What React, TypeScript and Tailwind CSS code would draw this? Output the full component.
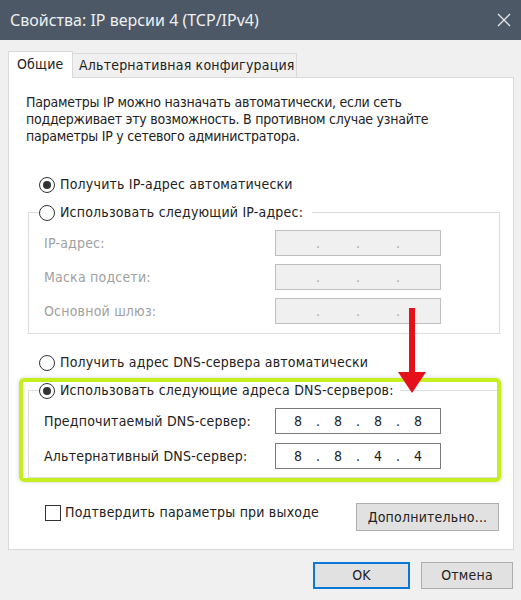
import React from 'react';

type RadioProps = { checked?: boolean; label: string };

const Radio: React.FC<RadioProps> = ({ checked, label }) => (
  <div className="flex items-center h-[17px]">
    <span className="w-[16px] h-[16px] rounded-full border border-[#333333] bg-white flex items-center justify-center shrink-0">
      {checked && <span className="w-[8px] h-[8px] rounded-full bg-[#333333]" />}
    </span>
    <span className="ml-[5px] whitespace-nowrap">{label}</span>
  </div>
);

type IpFieldProps = { parts: string[]; disabled?: boolean };

const IpField: React.FC<IpFieldProps> = ({ parts, disabled }) => (
  <div
    className={
      disabled
        ? 'w-[166px] h-[26px] border border-[#bfbfbf] bg-[#f0f0f0] text-[#a8a8a8] flex items-center pl-[12px] tracking-normal'
        : 'w-[166px] h-[26px] border border-[#7a7a7a] bg-white text-[#222222] flex items-center pl-[12px] tracking-normal'
    }
  >
    {parts.map((p, i) => (
      <React.Fragment key={i}>
        {i > 0 && <span className="w-[20px] text-center">.</span>}
        <span className="w-[20px] text-center">{p}</span>
      </React.Fragment>
    ))}
  </div>
);

const FieldRow: React.FC<{ label: string; parts: string[]; disabled?: boolean }> = ({ label, parts, disabled }) => (
  <div className="flex items-center">
    <span className={disabled ? 'w-[236px] pl-[5px] text-[#a0a0a0]' : 'w-[236px] pl-[5px]'}>{label}</span>
    <IpField parts={parts} disabled={disabled} />
  </div>
);

const App: React.FC = () => {
  return (
    <div className="relative w-[521px] h-[600px] overflow-hidden bg-[#f0f0f0] text-[#222222] text-[14px] leading-[17px] tracking-[0.2px] font-['DejaVu_Sans_Condensed','DejaVu_Sans',sans-serif]">
      {/* Title bar */}
      <div className="h-[40px] bg-[#4d5866] flex items-center justify-between pl-[10px] pr-[9px]">
        <span className="text-[#eef0f2] text-[16px] tracking-normal font-['Noto_Sans',sans-serif]">Свойства: IP версии 4 (TCP/IPv4)</span>
        <svg width="14" height="14" viewBox="0 0 14 14" className="mr-[1px]">
          <path d="M1 1 L13 13 M13 1 L1 13" stroke="#e4e7ea" strokeWidth="1.3" />
        </svg>
      </div>

      <div className="pt-[11px] px-[8px]">
        {/* Tabs */}
        <div className="flex items-end">
          <div className="relative z-10 -mb-px h-[27px] w-[65px] bg-white border border-b-0 border-[#d9d9d9] pl-[8px] pt-[4px]">
            Общие
          </div>
          <div className="h-[24px] w-[224px] bg-[#f0f0f0] border-t border-r border-[#d9d9d9] pl-[6px] pt-[3px] whitespace-nowrap">
            Альтернативная конфигурация
          </div>
        </div>

        {/* Tab page */}
        <div className="h-[473px] w-[506px] bg-white border border-[#d9d9d9] flex flex-col">
          <p className="pt-[16px] pl-[17px] whitespace-nowrap tracking-[-0.25px]">
            Параметры IP можно назначать автоматически, если сеть
            <br />
            поддерживает эту возможность. В противном случае узнайте
            <br />
            параметры IP у сетевого администратора.
          </p>

          <div className="mt-[31px] ml-[30px]">
            <Radio checked label="Получить IP-адрес автоматически" />
          </div>

          <fieldset className="mt-[11px] ml-[19px] mr-[13px] border border-[#dcdcdc] px-[10px] pb-[9px]">
            <legend className="bg-white pr-[9px]">
              <Radio label="Использовать следующий IP-адрес:" />
            </legend>
            <div className="mt-[9px] flex flex-col gap-[8px]">
              <FieldRow disabled label="IP-адрес:" parts={['', '', '', '']} />
              <FieldRow disabled label="Маска подсети:" parts={['', '', '', '']} />
              <FieldRow disabled label="Основной шлюз:" parts={['', '', '', '']} />
            </div>
          </fieldset>

          <div className="mt-[20px] ml-[30px]">
            <Radio label="Получить адрес DNS-сервера автоматически" />
          </div>

          {/* Highlighted DNS block */}
          <div className="mt-[7px] ml-[10px] mr-[12px] border-4 border-[#c4ef1d] rounded-[5px] shadow-[0_0_4px_rgba(0,0,0,0.18)]">
            <fieldset className="ml-[5px] border border-r-0 border-[#dcdcdc] px-[10px] pb-[8px]">
              <legend className="bg-white pr-[6px]">
                <Radio checked label="Использовать следующие адреса DNS-серверов:" />
              </legend>
              <div className="mt-[9px] flex flex-col gap-[9px]">
                <FieldRow label="Предпочитаемый DNS-сервер:" parts={['8', '8', '8', '8']} />
                <FieldRow label="Альтернативный DNS-сервер:" parts={['8', '8', '4', '4']} />
              </div>
            </fieldset>
          </div>

          <div className="mt-[21px] ml-[36px] mr-[14px] flex items-start justify-between">
            <div className="mt-[1px] flex items-center">
              <span className="w-[16px] h-[16px] border border-[#333333] bg-white" />
              <span className="ml-[4px]">Подтвердить параметры при выходе</span>
            </div>
            <button className="w-[143px] h-[28px] bg-[#e1e1e1] border border-[#adadad]">Дополнительно...</button>
          </div>
        </div>

        {/* Dialog buttons */}
        <div className="mt-[12px] flex justify-end gap-[11px]">
          <button className="w-[97px] h-[27px] bg-[#e1e1e1] border-2 border-[#0a78d4]">OK</button>
          <button className="w-[92px] h-[27px] bg-[#e1e1e1] border border-[#adadad]">Отмена</button>
        </div>
      </div>

      {/* Red pointer arrow */}
      <svg className="absolute left-[398px] top-[308px]" width="28" height="86" viewBox="0 0 28 86">
        <rect x="11" y="0" width="6" height="66" fill="#e5101a" />
        <polygon points="0,64 28,64 14,85" fill="#e5101a" />
      </svg>
    </div>
  );
};

export default App;
